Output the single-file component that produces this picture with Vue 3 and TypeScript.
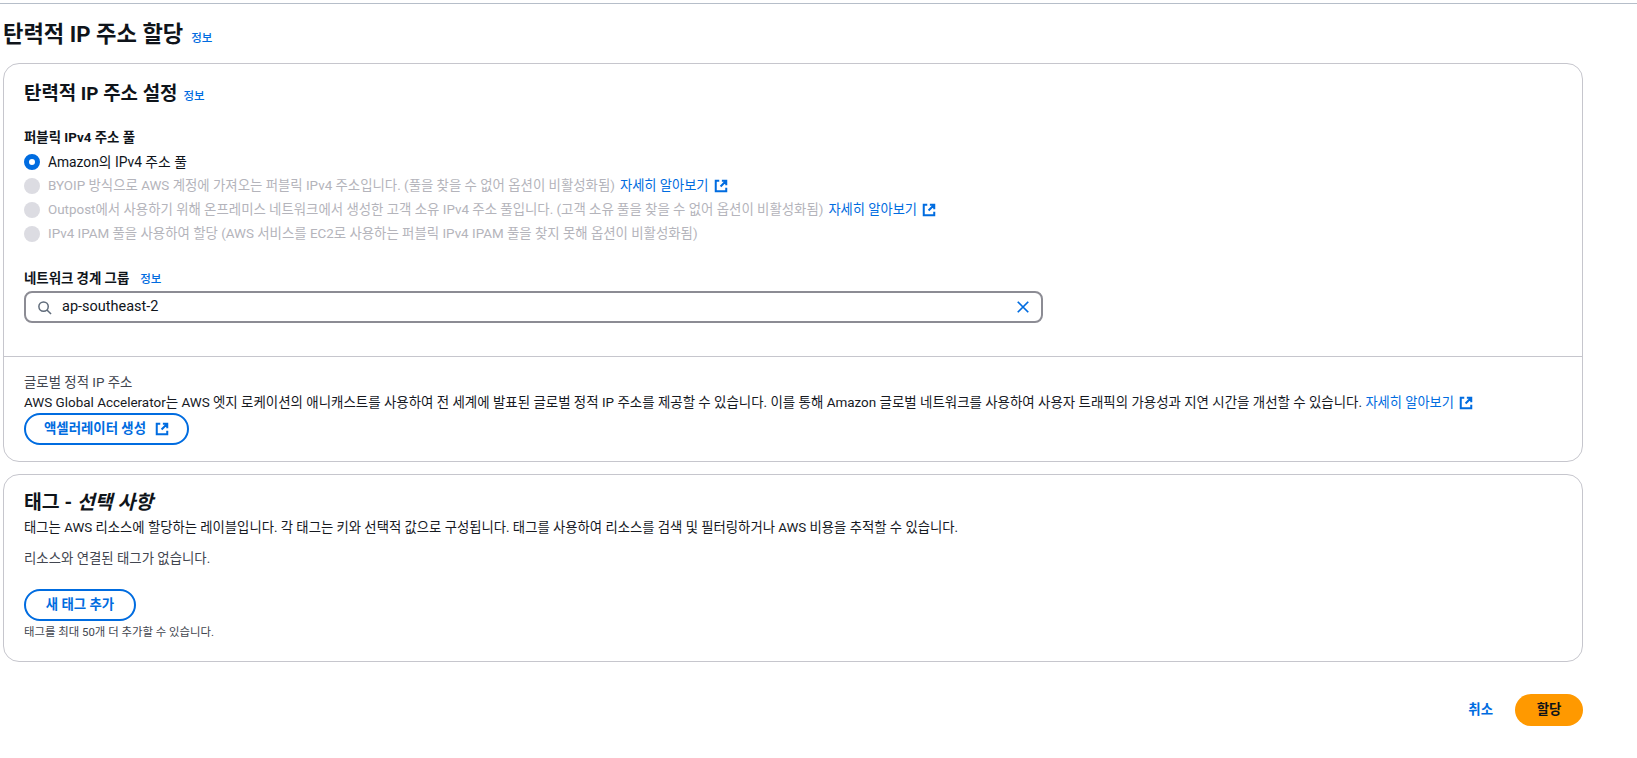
<script setup lang="ts">
const disabledOptions = [
  { text: 'BYOIP 방식으로 AWS 계정에 가져오는 퍼블릭 IPv4 주소입니다. (풀을 찾을 수 없어 옵션이 비활성화됨)', link: true },
  { text: 'Outpost에서 사용하기 위해 온프레미스 네트워크에서 생성한 고객 소유 IPv4 주소 풀입니다. (고객 소유 풀을 찾을 수 없어 옵션이 비활성화됨)', link: true },
  { text: 'IPv4 IPAM 풀을 사용하여 할당 (AWS 서비스를 EC2로 사용하는 퍼블릭 IPv4 IPAM 풀을 찾지 못해 옵션이 비활성화됨)', link: false },
]
</script>

<template>
  <div class="page">
    <div class="topline"></div>
    <div class="pagehead">
      <h1>탄력적 IP 주소 할당</h1>
      <a class="info">정보</a>
    </div>

    <section class="card first">
      <div class="main">
        <div class="cardhead">
          <h2>탄력적 IP 주소 설정</h2>
          <a class="info">정보</a>
        </div>
        <div class="label pool-label">퍼블릭 IPv4 주소 풀</div>
        <div class="radios">
          <div class="radio">
            <span class="dot on"></span>
            <span class="amazon">Amazon의 IPv4 주소 풀</span>
          </div>
          <div v-for="o in disabledOptions" :key="o.text" class="radio off">
            <span class="dot"></span>
            <span>{{ o.text }}</span>
            <a v-if="o.link" class="link">자세히 알아보기
              <svg class="ext" viewBox="0 0 16 16" fill="none" stroke="currentColor" stroke-width="2.3"><path d="M6 2H2v12h12v-4M9 2h5v5M14 2L7.5 8.5" /></svg>
            </a>
          </div>
        </div>
        <div class="label group-label">
          <span>네트워크 경계 그룹</span>
          <a class="info">정보</a>
        </div>
        <div class="search">
          <svg class="glass" viewBox="0 0 16 16" fill="none" stroke="#5f6b7a" stroke-width="1.6"><circle cx="7" cy="7" r="5" /><path d="M10.6 10.6L15 15" /></svg>
          <span class="value">ap-southeast-2</span>
          <svg class="clear" viewBox="0 0 16 16" fill="none" stroke="#006ce0" stroke-width="2"><path d="M2 2l12 12M14 2L2 14" /></svg>
        </div>
      </div>
      <div class="footer">
        <div class="muted">글로벌 정적 IP 주소</div>
        <div class="desc">AWS Global Accelerator는 AWS 엣지 로케이션의 애니캐스트를 사용하여 전 세계에 발표된 글로벌 정적 IP 주소를 제공할 수 있습니다. 이를 통해 Amazon 글로벌 네트워크를 사용하여 사용자 트래픽의 가용성과 지연 시간을 개선할 수 있습니다. <a class="link">자세히 알아보기
            <svg class="ext" viewBox="0 0 16 16" fill="none" stroke="currentColor" stroke-width="2.3"><path d="M6 2H2v12h12v-4M9 2h5v5M14 2L7.5 8.5" /></svg>
          </a></div>
        <button class="btn accel">액셀러레이터 생성
          <svg class="ext" viewBox="0 0 16 16" fill="none" stroke="currentColor" stroke-width="2.3"><path d="M6 2H2v12h12v-4M9 2h5v5M14 2L7.5 8.5" /></svg>
        </button>
      </div>
    </section>

    <section class="card second">
      <h2 class="tagtitle">태그 - <i>선택 사항</i></h2>
      <div class="desc tagdesc">태그는 AWS 리소스에 할당하는 레이블입니다. 각 태그는 키와 선택적 값으로 구성됩니다. 태그를 사용하여 리소스를 검색 및 필터링하거나 AWS 비용을 추적할 수 있습니다.</div>
      <div class="muted empty">리소스와 연결된 태그가 없습니다.</div>
      <button class="btn addtag">새 태그 추가</button>
      <div class="hint">태그를 최대 50개 더 추가할 수 있습니다.</div>
    </section>

    <div class="actions">
      <a class="cancel">취소</a>
      <button class="primary">할당</button>
    </div>
  </div>
</template>

<style>
html, body { margin: 0; background: #fff; }
</style>

<style scoped>
.page {
  width: 1637px;
  height: 758px;
  overflow: hidden;
  box-sizing: border-box;
  padding: 3px 54px 0 3px;
  font-family: Roboto, "Noto Sans CJK KR", sans-serif;
  font-size: 13.42px;
  line-height: 20px;
  color: #0f141a;
}
.topline { height: 1px; background: #b6bec9; margin: 0 -54px 0 -3px; }
.pagehead { display: flex; align-items: baseline; gap: 8px; height: 59px; padding-top: 15px; box-sizing: border-box; }
h1 { margin: 0; font-size: 22.2px; line-height: 30px; font-weight: 700; }
h2 { margin: 0; font-size: 18.9px; line-height: 24px; font-weight: 700; }
h2 i { font-style: italic; }
.info { color: #006ce0; font-size: 11.5px; font-weight: 500; }
.card { border: 1px solid #c6c6cd; border-radius: 16px; background: #fff; }
.main { padding: 16px 20px 33px; border-bottom: 1px solid #c6c6cd; }
.first { height: 399px; box-sizing: border-box; }
.cardhead { display: flex; align-items: baseline; gap: 6px; height: 28px; padding-top: 2px; box-sizing: border-box; }
.label { font-weight: 700; font-size: 13.4px; }
.pool-label { margin-top: 20px; }
.radios { display: flex; flex-direction: column; gap: 6px; margin-top: 5px; }
.radio { display: flex; align-items: center; gap: 5px; height: 18px; white-space: nowrap; }
.radio.off { color: #b4b4bb; }
.amazon { font-size: 13.8px; }
.dot { width: 16px; height: 16px; margin-right: 3px; border-radius: 50%; background: #dcdce2; flex: none; box-sizing: border-box; }
.dot.on { background: #fff; border: 5px solid #006ce0; }
.link { color: #006ce0; display: inline-flex; align-items: center; gap: 5px; font-weight: 400; font-size: 13.25px; }
.ext { width: 14px; height: 14px; flex: none; }
.group-label { display: flex; align-items: center; gap: 11px; margin-top: 26px; }
.search {
  display: flex;
  align-items: center;
  width: 1019px;
  height: 32px;
  box-sizing: border-box;
  margin-top: 2px;
  padding: 0 11px;
  border: 2px solid #8c8c94;
  border-radius: 8px;
}
.glass { width: 15px; height: 15px; flex: none; }
.value { margin-left: 10px; flex: 1; font-size: 14.5px; }
.clear { width: 14px; height: 14px; flex: none; }
.footer { padding: 16px 20px 0; }
.muted { color: #424650; }
.desc { color: #16191f; white-space: nowrap; font-size: 13.46px; }
.btn {
  display: flex;
  align-items: center;
  justify-content: center;
  box-sizing: border-box;
  background: #fff;
  border: 2px solid #006ce0;
  border-radius: 20px;
  color: #006ce0;
  font: inherit;
  font-weight: 700;
  height: 32px;
  padding: 0;
}
.accel { width: 165px; gap: 9px; margin-top: 0; }
.second { height: 188px; box-sizing: border-box; margin-top: 12px; padding: 16px 20px 0; }
.tagtitle { font-size: 19.4px; }
.tagdesc { margin-top: 3px; font-size: 13.35px; }
.empty { margin-top: 11px; }
.addtag { width: 112px; margin-top: 20px; }
.hint { font-size: 11.4px; line-height: 14px; color: #424650; margin-top: 4px; }
.actions { display: flex; justify-content: flex-end; align-items: center; gap: 22px; margin-top: 32px; }
.cancel { color: #006ce0; font-weight: 700; }
.primary {
  width: 68px;
  height: 32px;
  border: none;
  border-radius: 16px;
  background: #ff9900;
  color: #0f141a;
  font: inherit;
  font-weight: 700;
}
</style>
